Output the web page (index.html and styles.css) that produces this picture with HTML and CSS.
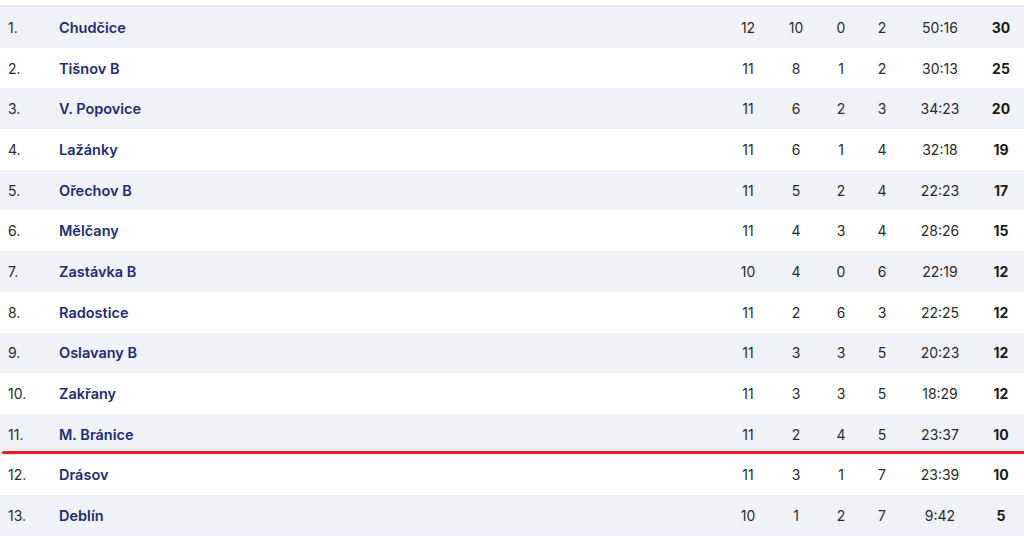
FILE: index.html
```html
<!DOCTYPE html>
<html lang="cs">
<head>
<meta charset="utf-8">
<title>Tabulka</title>
<link rel="stylesheet" href="styles.css">
</head>
<body>
<div class="table">
  <div class="row"><span class="rank">1.</span><span class="team">Chudčice</span><span class="num">12</span><span class="num">10</span><span class="num">0</span><span class="num">2</span><span class="num">50:16</span><span class="pts">30</span></div>
  <div class="row"><span class="rank">2.</span><span class="team">Tišnov B</span><span class="num">11</span><span class="num">8</span><span class="num">1</span><span class="num">2</span><span class="num">30:13</span><span class="pts">25</span></div>
  <div class="row"><span class="rank">3.</span><span class="team">V. Popovice</span><span class="num">11</span><span class="num">6</span><span class="num">2</span><span class="num">3</span><span class="num">34:23</span><span class="pts">20</span></div>
  <div class="row"><span class="rank">4.</span><span class="team">Lažánky</span><span class="num">11</span><span class="num">6</span><span class="num">1</span><span class="num">4</span><span class="num">32:18</span><span class="pts">19</span></div>
  <div class="row"><span class="rank">5.</span><span class="team">Ořechov B</span><span class="num">11</span><span class="num">5</span><span class="num">2</span><span class="num">4</span><span class="num">22:23</span><span class="pts">17</span></div>
  <div class="row"><span class="rank">6.</span><span class="team">Mělčany</span><span class="num">11</span><span class="num">4</span><span class="num">3</span><span class="num">4</span><span class="num">28:26</span><span class="pts">15</span></div>
  <div class="row"><span class="rank">7.</span><span class="team">Zastávka B</span><span class="num">10</span><span class="num">4</span><span class="num">0</span><span class="num">6</span><span class="num">22:19</span><span class="pts">12</span></div>
  <div class="row"><span class="rank">8.</span><span class="team">Radostice</span><span class="num">11</span><span class="num">2</span><span class="num">6</span><span class="num">3</span><span class="num">22:25</span><span class="pts">12</span></div>
  <div class="row"><span class="rank">9.</span><span class="team">Oslavany B</span><span class="num">11</span><span class="num">3</span><span class="num">3</span><span class="num">5</span><span class="num">20:23</span><span class="pts">12</span></div>
  <div class="row"><span class="rank">10.</span><span class="team">Zakřany</span><span class="num">11</span><span class="num">3</span><span class="num">3</span><span class="num">5</span><span class="num">18:29</span><span class="pts">12</span></div>
  <div class="row cut"><span class="rank">11.</span><span class="team">M. Bránice</span><span class="num">11</span><span class="num">2</span><span class="num">4</span><span class="num">5</span><span class="num">23:37</span><span class="pts">10</span></div>
  <div class="row"><span class="rank">12.</span><span class="team">Drásov</span><span class="num">11</span><span class="num">3</span><span class="num">1</span><span class="num">7</span><span class="num">23:39</span><span class="pts">10</span></div>
  <div class="row"><span class="rank">13.</span><span class="team">Deblín</span><span class="num">10</span><span class="num">1</span><span class="num">2</span><span class="num">7</span><span class="num">9:42</span><span class="pts">5</span></div>
</div>
</body>
</html>
```

FILE: styles.css
```css
html, body {
  margin: 0;
  padding: 0;
  background: #ffffff;
}
body {
  font-family: Inter, "Noto Sans", "Liberation Sans", sans-serif;
  font-size: 14px;
  color: #2a2a2a;
  padding-top: 5px;
}
.table {
  border-top: 2px solid #e7e9ee;
}
.row {
  display: grid;
  grid-template-columns: 51px 1fr 48px 48px 42px 40px 76px 46px;
  align-items: center;
  height: 40.7px;
  padding-left: 8px;
  box-sizing: border-box;
}
.row:nth-child(odd) {
  background: #f1f2f7;
}
.rank {
  color: #2a2a2a;
}
.team {
  color: #1d2c78;
  font-weight: 600;
  font-size: 14.5px;
}
.num {
  text-align: center;
}
.pts {
  text-align: center;
  font-weight: 700;
  color: #1a1a1a;
}
.cut {
  position: relative;
}
.cut::after {
  content: "";
  position: absolute;
  left: 2px;
  right: 0;
  bottom: 1px;
  height: 3px;
  border-radius: 2px 0 0 2px;
  background: #ec1c24;
}
```
